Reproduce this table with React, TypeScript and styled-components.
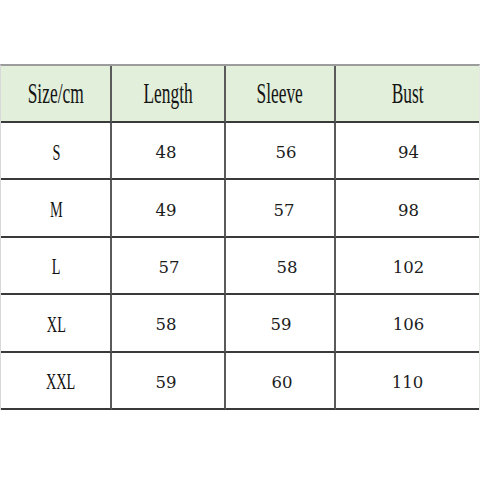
import React from "react";
import styled, { createGlobalStyle } from "styled-components";

const GlobalStyle = createGlobalStyle`
  html, body {
    margin: 0;
    padding: 0;
    background: #ffffff;
  }
`;

const Page = styled.div`
  width: 480px;
  height: 480px;
  padding-top: 64px;
  box-sizing: border-box;
  background: #ffffff;
`;

const Table = styled.div`
  display: grid;
  grid-template-columns: 111px 114px 110px 1fr;
  grid-template-rows: 57px repeat(5, 57.4px);
  border-top: 2px solid #9c9c9c;
  border-left: 1px solid #d8d8d8;
  border-right: 1px solid #e4e8e2;
  width: 480px;
  box-sizing: border-box;
`;

const Cell = styled.div<{ $head?: boolean; $last?: boolean }>`
  display: flex;
  align-items: center;
  justify-content: center;
  box-sizing: border-box;
  background: ${({ $head }) => ($head ? "#e2efda" : "#ffffff")};
  border-bottom: 2px solid #3a3a3a;
  border-right: ${({ $last }) => ($last ? "none" : "2px solid #5a5a5a")};
`;

const HeadText = styled.span`
  display: inline-block;
  font-family: "Liberation Serif", "Times New Roman", serif;
  font-size: 29px;
  color: #141414;
  transform: scaleX(0.6);
  white-space: nowrap;
`;

const SizeText = styled.span<{ $dx?: number }>`
  display: inline-block;
  font-family: "Liberation Serif", "Times New Roman", serif;
  font-size: 23px;
  color: #111111;
  transform: translate(${({ $dx }) => $dx ?? 0}px, 2px) scaleX(0.62);
  white-space: nowrap;
`;

const NumText = styled.span<{ $dx?: number }>`
  display: inline-block;
  font-family: "DejaVu Serif", "Liberation Serif", serif;
  font-size: 16.5px;
  color: #1c1c1c;
  transform: translate(${({ $dx }) => $dx ?? 0}px, 2px);
`;

const headers = ["Size/cm", "Length", "Sleeve", "Bust"];

const rows = [
  { size: "S", sdx: 1, values: [["48", -2], ["56", 6], ["94", 1]] },
  { size: "M", sdx: 1, values: [["49", -2], ["57", 4], ["98", 1]] },
  { size: "L", sdx: 1, values: [["57", 1], ["58", 7], ["102", 1]] },
  { size: "XL", sdx: 1, values: [["58", -2], ["59", 1], ["106", 1]] },
  { size: "XXL", sdx: 5, values: [["59", -2], ["60", 2], ["110", 0]] },
] as const;

const App: React.FC = () => {
  return (
    <Page>
      <GlobalStyle />
      <Table>
        {headers.map((h, i) => (
          <Cell key={h} $head $last={i === headers.length - 1}>
            <HeadText>{h}</HeadText>
          </Cell>
        ))}
        {rows.map((row) => (
          <React.Fragment key={row.size}>
            <Cell>
              <SizeText $dx={row.sdx}>{row.size}</SizeText>
            </Cell>
            {row.values.map(([v, dx], i) => (
              <Cell key={i} $last={i === row.values.length - 1}>
                <NumText $dx={dx}>{v}</NumText>
              </Cell>
            ))}
          </React.Fragment>
        ))}
      </Table>
    </Page>
  );
};

export default App;
